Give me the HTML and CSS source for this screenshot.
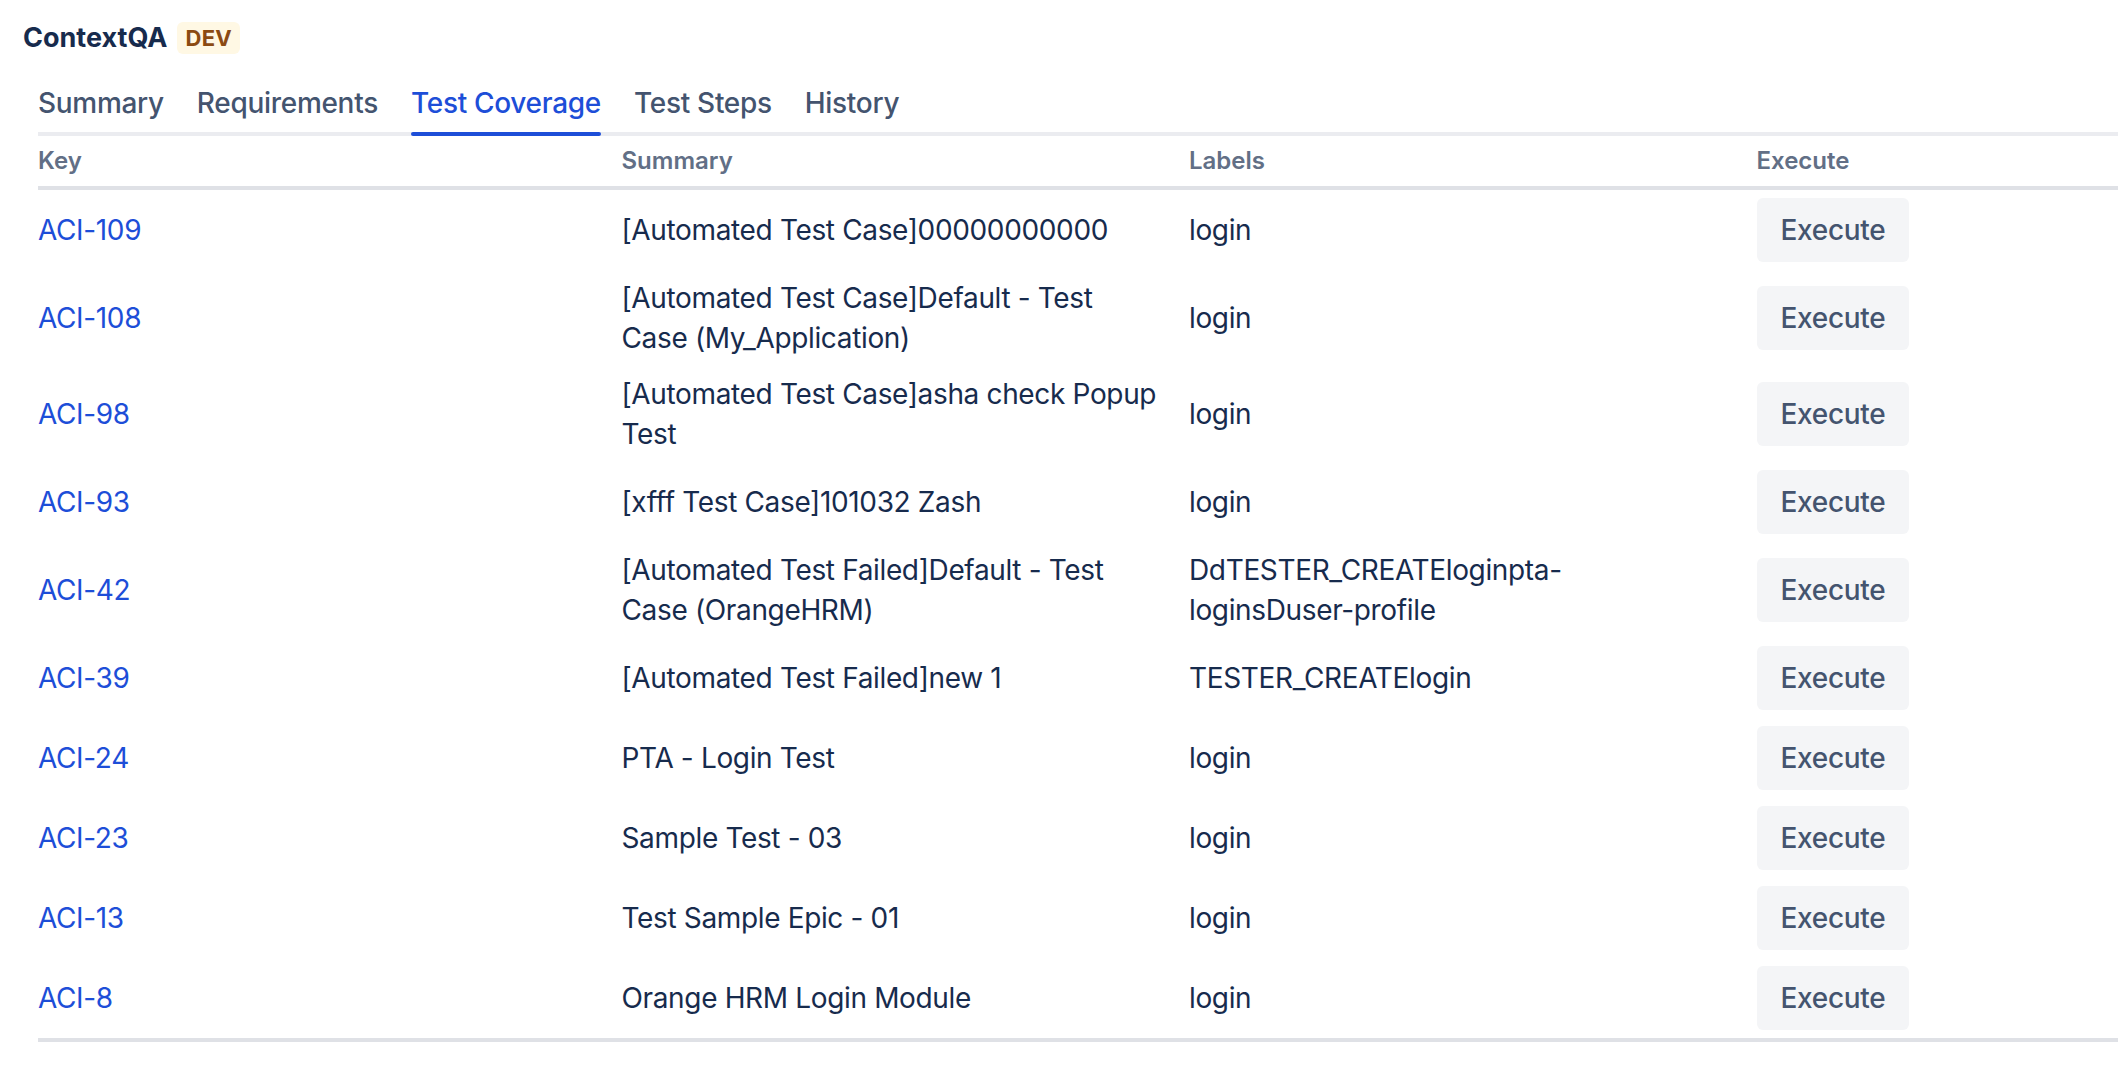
FILE: index.html
```html
<!DOCTYPE html>
<html lang="en">
<head>
<meta charset="utf-8">
<title>ContextQA</title>
<link rel="stylesheet" href="styles.css">
</head>
<body>
<div class="app">
  <header class="title">
    <span class="name">ContextQA</span>
    <span class="badge">DEV</span>
  </header>
  <div class="content">
    <nav class="tabs">
      <span class="tab">Summary</span>
      <span class="tab">Requirements</span>
      <span class="tab active">Test Coverage</span>
      <span class="tab">Test Steps</span>
      <span class="tab">History</span>
    </nav>
    <table class="grid">
      <colgroup><col><col><col><col></colgroup>
      <thead>
        <tr><th>Key</th><th>Summary</th><th>Labels</th><th>Execute</th></tr>
      </thead>
      <tbody>
        <tr><td><a class="key" href="#">ACI-109</a></td><td>[Automated Test Case]00000000000</td><td>login</td><td><button class="exec">Execute</button></td></tr>
        <tr><td><a class="key" href="#">ACI-108</a></td><td>[Automated Test Case]Default - Test Case (My_Application)</td><td>login</td><td><button class="exec">Execute</button></td></tr>
        <tr><td><a class="key" href="#">ACI-98</a></td><td>[Automated Test Case]asha check Popup Test</td><td>login</td><td><button class="exec">Execute</button></td></tr>
        <tr><td><a class="key" href="#">ACI-93</a></td><td>[xfff Test Case]101032 Zash</td><td>login</td><td><button class="exec">Execute</button></td></tr>
        <tr><td><a class="key" href="#">ACI-42</a></td><td>[Automated Test Failed]Default - Test Case (OrangeHRM)</td><td>DdTESTER_CREATEloginpta-loginsDuser-profile</td><td><button class="exec">Execute</button></td></tr>
        <tr><td><a class="key" href="#">ACI-39</a></td><td>[Automated Test Failed]new 1</td><td>TESTER_CREATElogin</td><td><button class="exec">Execute</button></td></tr>
        <tr><td><a class="key" href="#">ACI-24</a></td><td>PTA - Login Test</td><td>login</td><td><button class="exec">Execute</button></td></tr>
        <tr><td><a class="key" href="#">ACI-23</a></td><td>Sample Test - 03</td><td>login</td><td><button class="exec">Execute</button></td></tr>
        <tr><td><a class="key" href="#">ACI-13</a></td><td>Test Sample Epic - 01</td><td>login</td><td><button class="exec">Execute</button></td></tr>
        <tr><td><a class="key" href="#">ACI-8</a></td><td>Orange HRM Login Module</td><td>login</td><td><button class="exec">Execute</button></td></tr>
      </tbody>
    </table>
  </div>
</div>
</body>
</html>
```
FILE: styles.css
```css
html, body {
  margin: 0;
  padding: 0;
  background: #ffffff;
  overflow: hidden;
}

body {
  font-family: Inter, "Noto Sans", "Liberation Sans", sans-serif;
  color: #172b4d;
}

.app {
  padding-left: 23px;
}

.title {
  display: flex;
  align-items: center;
  gap: 10px;
  height: 32px;
  margin-top: 22px;
}

.name {
  font-size: 27px;
  font-weight: 700;
  line-height: 32px;
  color: #172b4d;
}

.badge {
  display: inline-flex;
  align-items: center;
  height: 32px;
  padding: 0 8px;
  border-radius: 6px;
  background: #fff8e4;
  color: #8b4a12;
  font-size: 22px;
  font-weight: 700;
  letter-spacing: 0.3px;
}

.content {
  margin-left: 15px;
}

.tabs {
  display: flex;
  gap: 33px;
  margin-top: 29px;
  border-bottom: 4px solid #ebecf0;
}

.tab {
  position: relative;
  font-size: 28px;
  font-weight: 500;
  line-height: 40px;
  padding-bottom: 9px;
  color: #44546f;
  white-space: nowrap;
  letter-spacing: -0.3px;
}

.tab.active {
  color: #1d4ed8;
}

.tab.active::after {
  content: "";
  position: absolute;
  left: 0;
  right: 0;
  bottom: -4px;
  height: 4px;
  border-radius: 2px;
  background: #1d4ed8;
}

.grid {
  width: 2270px;
  table-layout: fixed;
  border-collapse: collapse;
  border-bottom: 4px solid #dfe1e6;
}

.grid col {
  width: 567.5px;
}

.grid th {
  text-align: left;
  font-size: 24px;
  font-weight: 600;
  line-height: 32px;
  color: #626f86;
  padding: 9px 16px;
  border-bottom: 4px solid #dfe1e6;
}

.grid td {
  font-size: 28px;
  line-height: 40px;
  padding: 8px 16px;
  vertical-align: middle;
  color: #172b4d;
  letter-spacing: -0.35px;
}

.grid th:first-child,
.grid td:first-child {
  padding-left: 0;
}

.grid th:last-child,
.grid td:last-child {
  padding-right: 0;
}

.key {
  color: #1d4ed8;
  text-decoration: none;
}

.exec {
  display: block;
  height: 64px;
  padding: 0 24px;
  border: none;
  border-radius: 6px;
  background: #f4f5f7;
  color: #44546f;
  font-family: Inter, "Noto Sans", "Liberation Sans", sans-serif;
  font-size: 28px;
  font-weight: 500;
  letter-spacing: -0.3px;
}
```
